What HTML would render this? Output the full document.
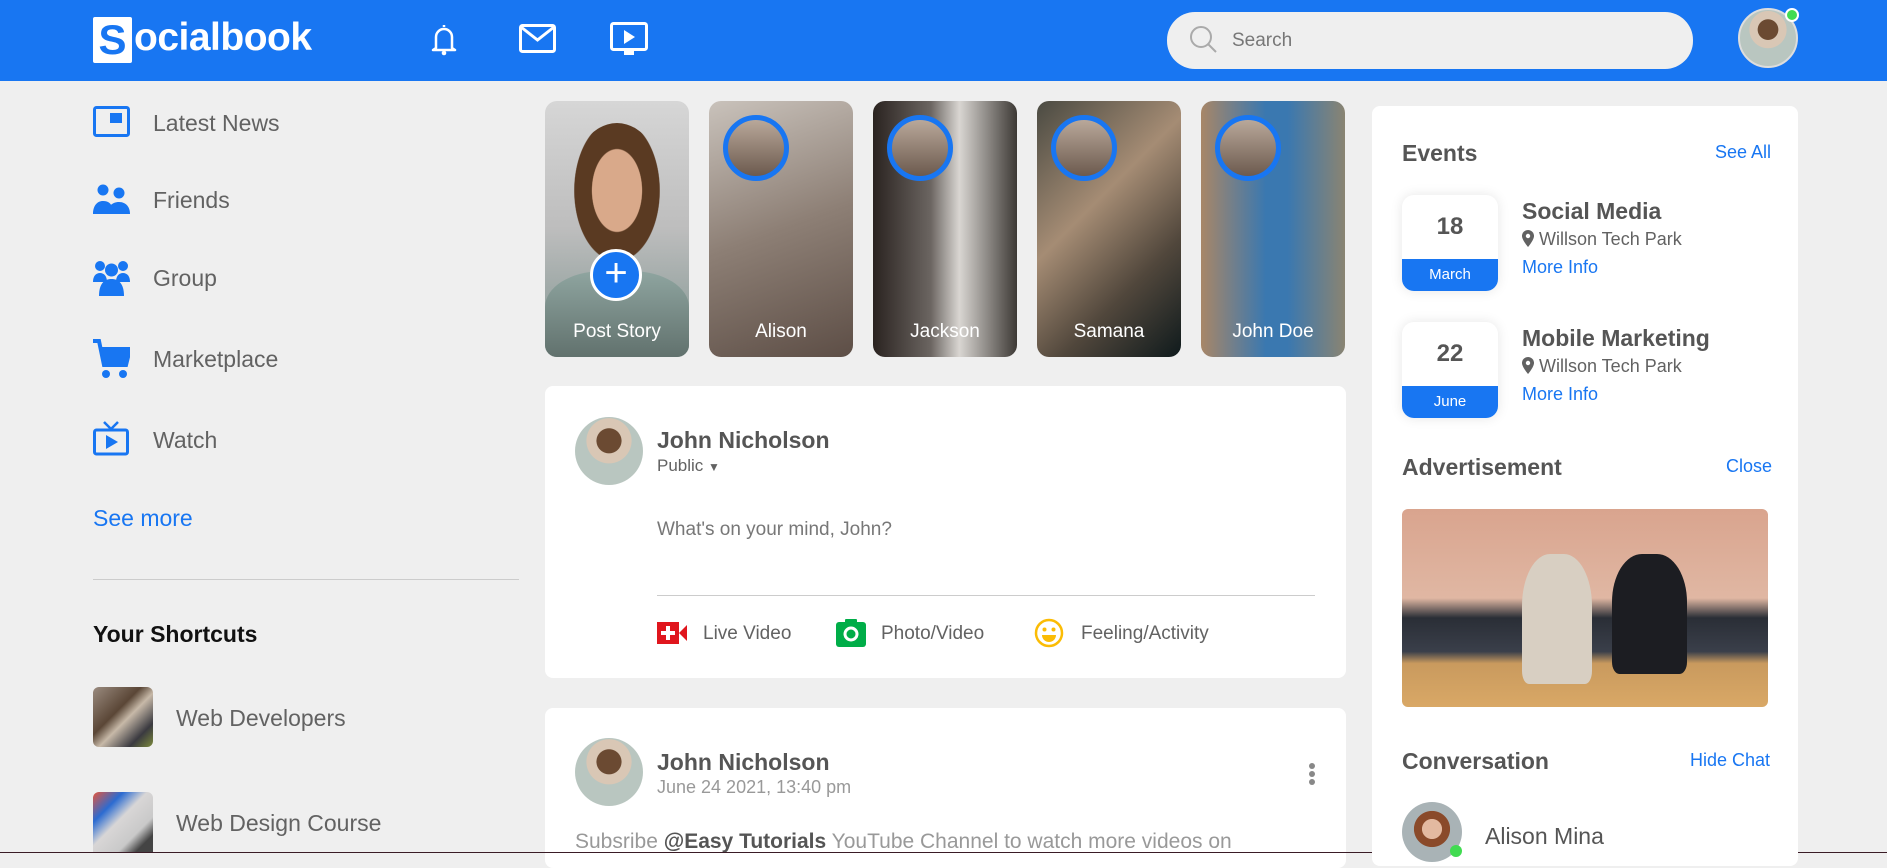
<!DOCTYPE html>
<html><head><meta charset="utf-8"><style>
*{margin:0;padding:0;box-sizing:border-box}
body{width:1887px;height:853px;overflow:hidden;background:#efefef;font-family:"Liberation Sans",sans-serif;color:#626262;position:relative}
.a{position:absolute}
.hdr{left:0;top:0;width:1887px;height:81px;background:#1876f2}
.nav{font-size:23px;color:#626262}
.blue{color:#1876f2}
.story{width:144px;height:256px;border-radius:12px;overflow:hidden;top:101px}
.story .lbl{position:absolute;bottom:14px;width:100%;text-align:center;color:#fff;font-size:19px}
.ring{position:absolute;left:14px;top:14px;width:66px;height:66px;border-radius:50%;border:5px solid #1876f2;background:linear-gradient(#b9a89a,#6c5a4e)}
.card{background:#fff;border-radius:8px}
.av{border-radius:50%;background:radial-gradient(circle at 50% 35%,#6b4a32 0 22%,#d9c7b5 23% 40%,#b9c6c0 41%)}
.sb{font-size:19px;color:#626262}
.dbox{width:96px;height:96px;border-radius:12px;background:#fff;box-shadow:0 0 12px rgba(0,0,0,.1);overflow:hidden}
.dbox .n{height:64px;line-height:64px;text-align:center;font-weight:bold;font-size:24px;color:#555}
.dbox .m{height:32px;line-height:32px;text-align:center;background:#1876f2;color:#fff;font-size:15px}
.h3{font-size:23px;font-weight:bold;color:#555}
</style></head><body>
<div class="a hdr"></div>
<div class="a" style="left:93px;top:17px;width:39px;height:46px;background:#fff;border-radius:2px;color:#1876f2;font-weight:bold;font-size:42px;text-align:center;line-height:46px">S</div>
<div class="a" style="left:134px;top:16px;color:#fff;font-weight:bold;font-size:39px;letter-spacing:-0.5px">ocialbook</div>
<svg class="a" style="left:429px;top:22px" width="30" height="34" viewBox="0 0 30 34"><path d="M15 3v2M7 26V15a8 8 0 0 1 16 0v11l3 2H4z" fill="none" stroke="#fff" stroke-width="2.5" stroke-linejoin="round"/><circle cx="15" cy="31" r="2.3" fill="#fff"/></svg>
<svg class="a" style="left:519px;top:24px" width="37" height="29" viewBox="0 0 37 29"><rect x="1.5" y="1.5" width="34" height="26" rx="2" fill="none" stroke="#fff" stroke-width="3"/><path d="M2 3l16.5 13L35 3" fill="none" stroke="#fff" stroke-width="3"/></svg>
<svg class="a" style="left:610px;top:22px" width="38" height="33" viewBox="0 0 38 33"><rect x="1.5" y="1.5" width="35" height="26" rx="2" fill="none" stroke="#fff" stroke-width="3"/><path d="M14 8v14l11-7z" fill="#fff"/><rect x="14" y="29" width="10" height="4" fill="#fff"/></svg>
<div class="a" style="left:1167px;top:12px;width:526px;height:57px;border-radius:28px;background:#efefef"></div>
<svg class="a" style="left:1189px;top:25px" width="30" height="30" viewBox="0 0 30 30"><circle cx="12" cy="12" r="10" fill="none" stroke="#aaa" stroke-width="2"/><path d="M19 19l8 8" stroke="#aaa" stroke-width="2"/></svg>
<div class="a" style="left:1232px;top:30px;font-size:19px;color:#777">Search</div>
<div class="a av" style="left:1738px;top:8px;width:60px;height:60px;border:2px solid #ddd"></div>
<div class="a" style="left:1785px;top:8px;width:14px;height:14px;border-radius:50%;background:#41db51;border:2px solid #fff"></div>

<svg class="a" style="left:93px;top:106px" width="37" height="31" viewBox="0 0 37 31"><rect x="1.5" y="1.5" width="34" height="28" rx="2" fill="none" stroke="#1876f2" stroke-width="3"/><rect x="17" y="7" width="12" height="10" fill="#1876f2"/></svg>
<div class="a nav" style="left:153px;top:110px">Latest News</div>
<svg class="a" style="left:93px;top:184px" width="37" height="30" viewBox="0 0 37 30"><circle cx="10" cy="6" r="5.5" fill="#1876f2"/><circle cx="26" cy="9" r="5.5" fill="#1876f2"/><path d="M0 30c0-8 4-13 10-13s8 3 9 6c-3 2-4 5-4 7z" fill="#1876f2"/><path d="M14 30c0-7 5-12 12-12s11 5 11 12z" fill="#1876f2"/></svg>
<div class="a nav" style="left:153px;top:187px">Friends</div>
<svg class="a" style="left:93px;top:260px" width="37" height="36" viewBox="0 0 37 36"><circle cx="7" cy="6" r="5" fill="#1876f2"/><circle cx="30" cy="6" r="5" fill="#1876f2"/><circle cx="18.5" cy="10" r="6.5" fill="#1876f2"/><path d="M0 22c0-6 3-9 7-9s7 3 7 9z M23 22c0-6 3-9 7-9s7 3 7 9z" fill="#1876f2"/><path d="M6 36c0-12 5-17 12.5-17S31 24 31 36z" fill="#1876f2"/></svg>
<div class="a nav" style="left:153px;top:265px">Group</div>
<svg class="a" style="left:93px;top:339px" width="37" height="40" viewBox="0 0 37 40"><path d="M0 2h6l5 24h22l4-16H9" fill="none" stroke="#1876f2" stroke-width="4"/><path d="M9 10h28l-4 16H12z" fill="#1876f2"/><circle cx="13" cy="35" r="4" fill="#1876f2"/><circle cx="30" cy="35" r="4" fill="#1876f2"/></svg>
<div class="a nav" style="left:153px;top:346px">Marketplace</div>
<svg class="a" style="left:93px;top:421px" width="36" height="35" viewBox="0 0 36 35"><path d="M11 1l7 7 7-7" fill="none" stroke="#1876f2" stroke-width="2.5"/><rect x="1.5" y="9" width="33" height="24" rx="2" fill="none" stroke="#1876f2" stroke-width="3"/><path d="M13 14v14l12-7z" fill="#1876f2"/></svg>
<div class="a nav" style="left:153px;top:427px">Watch</div>
<div class="a" style="left:93px;top:505px;font-size:23px;color:#1876f2">See more</div>
<div class="a" style="left:93px;top:579px;width:426px;height:1px;background:#ccc"></div>
<div class="a" style="left:93px;top:621px;font-size:23px;color:#111;font-weight:bold">Your Shortcuts</div>
<div class="a" style="left:93px;top:687px;width:60px;height:60px;border-radius:6px;background:linear-gradient(135deg,#9a8b7f,#5a4636 40%,#c7b9a8 55%,#3a3a40 80%,#7c8a3c)"></div>
<div class="a sb" style="left:176px;top:705px;font-size:23px">Web Developers</div>
<div class="a" style="left:93px;top:792px;width:60px;height:61px;border-radius:6px 6px 0 0;background:linear-gradient(135deg,#e6553b,#2b6bd1 25%,#d8d6d6 45%,#c9c9c9 70%,#444 85%)"></div>
<div class="a sb" style="left:176px;top:810px;font-size:23px">Web Design Course</div>

<div class="a story" style="left:545px;background:linear-gradient(180deg,#d6d6d6,#bdbdbd 50%,#7f9490)">
 <div class="a" style="left:22px;top:22px;width:100px;height:150px;border-radius:50% 50% 40% 40%;background:radial-gradient(ellipse at 50% 45%,#d9a98a 0 35%,#5a3a22 36% 60%,transparent 61%)"></div>
 <div class="a" style="left:0;top:170px;width:144px;height:90px;background:linear-gradient(180deg,#8fa5a0,#5f6f6b);border-radius:40% 40% 0 0"></div>
 <div class="a" style="left:45px;top:148px;width:52px;height:52px;border-radius:50%;background:#1876f2;border:3px solid #fff;color:#fff;font-size:40px;line-height:42px;text-align:center">+</div>
 <div class="lbl">Post Story</div></div>
<div class="a story" style="left:709px;background:linear-gradient(160deg,#c9c2bb,#8d7f75 50%,#5d4e46)"><div class="ring"></div><div class="lbl">Alison</div></div>
<div class="a story" style="left:873px;background:linear-gradient(90deg,#2a2320,#6b6561 40%,#d9d6d2 60%,#3d3935)"><div class="ring"></div><div class="lbl">Jackson</div></div>
<div class="a story" style="left:1037px;background:linear-gradient(135deg,#4a4a42,#a58c74 40%,#51473c 70%,#0f1a1c)"><div class="ring"></div><div class="lbl">Samana</div></div>
<div class="a story" style="left:1201px;background:linear-gradient(90deg,#a88667,#3a78b0 45%,#3a78b0 60%,#8a8472)"><div class="ring"></div><div class="lbl">John Doe</div></div>

<div class="a card" style="left:545px;top:386px;width:801px;height:292px"></div>
<div class="a av" style="left:575px;top:417px;width:68px;height:68px"></div>
<div class="a" style="left:657px;top:427px;font-size:23px;font-weight:bold;color:#555">John Nicholson</div>
<div class="a" style="left:657px;top:456px;font-size:17px;color:#626262">Public <span style="font-size:12px">▼</span></div>
<div class="a" style="left:657px;top:519px;font-size:19px;color:#777">What's on your mind, John?</div>
<div class="a" style="left:657px;top:595px;width:658px;height:1px;background:#ccc"></div>
<svg class="a" style="left:657px;top:622px" width="30" height="22" viewBox="0 0 30 22"><rect width="22" height="22" fill="#e0161d"/><path d="M22 11l8-8v16z" fill="#e0161d"/><path d="M11 4v14M4 11h14" stroke="#fff" stroke-width="4"/></svg>
<div class="a" style="left:703px;top:623px;font-size:19px">Live Video</div>
<svg class="a" style="left:836px;top:619px" width="30" height="28" viewBox="0 0 30 28"><rect y="3" width="30" height="25" rx="3" fill="#00ad48"/><rect x="9" width="12" height="5" rx="1" fill="#00ad48"/><circle cx="15" cy="15" r="6" fill="none" stroke="#fff" stroke-width="3"/></svg>
<div class="a" style="left:881px;top:623px;font-size:19px">Photo/Video</div>
<svg class="a" style="left:1034px;top:618px" width="30" height="30" viewBox="0 0 30 30"><circle cx="15" cy="15" r="13" fill="none" stroke="#fbbc05" stroke-width="2.5"/><circle cx="10.5" cy="11.5" r="2" fill="#fbbc05"/><circle cx="19.5" cy="11.5" r="2" fill="#fbbc05"/><path d="M8 17h14a7 7 0 0 1-14 0z" fill="#fbbc05"/></svg>
<div class="a" style="left:1081px;top:623px;font-size:19px">Feeling/Activity</div>

<div class="a card" style="left:545px;top:708px;width:801px;height:160px"></div>
<div class="a av" style="left:575px;top:738px;width:68px;height:68px"></div>
<div class="a" style="left:657px;top:749px;font-size:23px;font-weight:bold;color:#555">John Nicholson</div>
<div class="a" style="left:657px;top:777px;font-size:18px;color:#999">June 24 2021, 13:40 pm</div>
<div class="a" style="left:1309px;top:763px;width:6px;height:6px;border-radius:50%;background:#888;box-shadow:0 8px 0 #888,0 16px 0 #888"></div>
<div class="a" style="left:575px;top:830px;font-size:21px;color:#999">Subsribe <b style="color:#555">@Easy Tutorials</b> YouTube Channel to watch more videos on</div>
<div class="a" style="left:0;top:852px;width:1887px;height:1px;background:#3a1c26"></div>

<div class="a card" style="left:1372px;top:106px;width:426px;height:760px"></div>
<div class="a h3" style="left:1402px;top:140px">Events</div>
<div class="a blue" style="left:1715px;top:142px;font-size:18px">See All</div>
<div class="a dbox" style="left:1402px;top:195px"><div class="n">18</div><div class="m">March</div></div>
<div class="a" style="left:1522px;top:198px;font-size:23px;font-weight:bold;color:#555">Social Media</div>
<div class="a" style="left:1522px;top:229px;font-size:18px"><svg width="12" height="17" viewBox="0 0 12 17" style="vertical-align:-2px"><path d="M6 0a6 6 0 0 0-6 6c0 4 6 11 6 11s6-7 6-11a6 6 0 0 0-6-6z" fill="#626262"/><circle cx="6" cy="6" r="2.2" fill="#fff"/></svg> Willson Tech Park</div>
<div class="a blue" style="left:1522px;top:257px;font-size:18px">More Info</div>
<div class="a dbox" style="left:1402px;top:322px"><div class="n">22</div><div class="m">June</div></div>
<div class="a" style="left:1522px;top:325px;font-size:23px;font-weight:bold;color:#555">Mobile Marketing</div>
<div class="a" style="left:1522px;top:356px;font-size:18px"><svg width="12" height="17" viewBox="0 0 12 17" style="vertical-align:-2px"><path d="M6 0a6 6 0 0 0-6 6c0 4 6 11 6 11s6-7 6-11a6 6 0 0 0-6-6z" fill="#626262"/><circle cx="6" cy="6" r="2.2" fill="#fff"/></svg> Willson Tech Park</div>
<div class="a blue" style="left:1522px;top:384px;font-size:18px">More Info</div>
<div class="a h3" style="left:1402px;top:454px">Advertisement</div>
<div class="a blue" style="left:1726px;top:456px;font-size:18px">Close</div>
<div class="a" style="left:1402px;top:509px;width:366px;height:198px;border-radius:6px;overflow:hidden;background:linear-gradient(180deg,#d9a48e 0%,#e0b7a3 45%,#2a2e36 55%,#3a3f4a 72%,#c99a5e 78%,#d9a866 100%)">
 <div class="a" style="left:120px;top:45px;width:70px;height:130px;border-radius:40% 40% 10% 10%;background:#d8cfc2"></div>
 <div class="a" style="left:210px;top:45px;width:75px;height:120px;border-radius:40% 40% 10% 10%;background:#1c1d22"></div>
</div>
<div class="a h3" style="left:1402px;top:748px">Conversation</div>
<div class="a blue" style="left:1690px;top:750px;font-size:18px">Hide Chat</div>
<div class="a" style="left:1402px;top:802px;width:60px;height:60px;border-radius:50%;background:radial-gradient(circle at 50% 45%,#e3b9a0 0 22%,#8a4a2a 23% 40%,#a9b3b6 41%)"></div>
<div class="a" style="left:1450px;top:845px;width:12px;height:12px;border-radius:50%;background:#41db51"></div>
<div class="a" style="left:1485px;top:823px;font-size:23px;color:#555">Alison Mina</div>
</body></html>
